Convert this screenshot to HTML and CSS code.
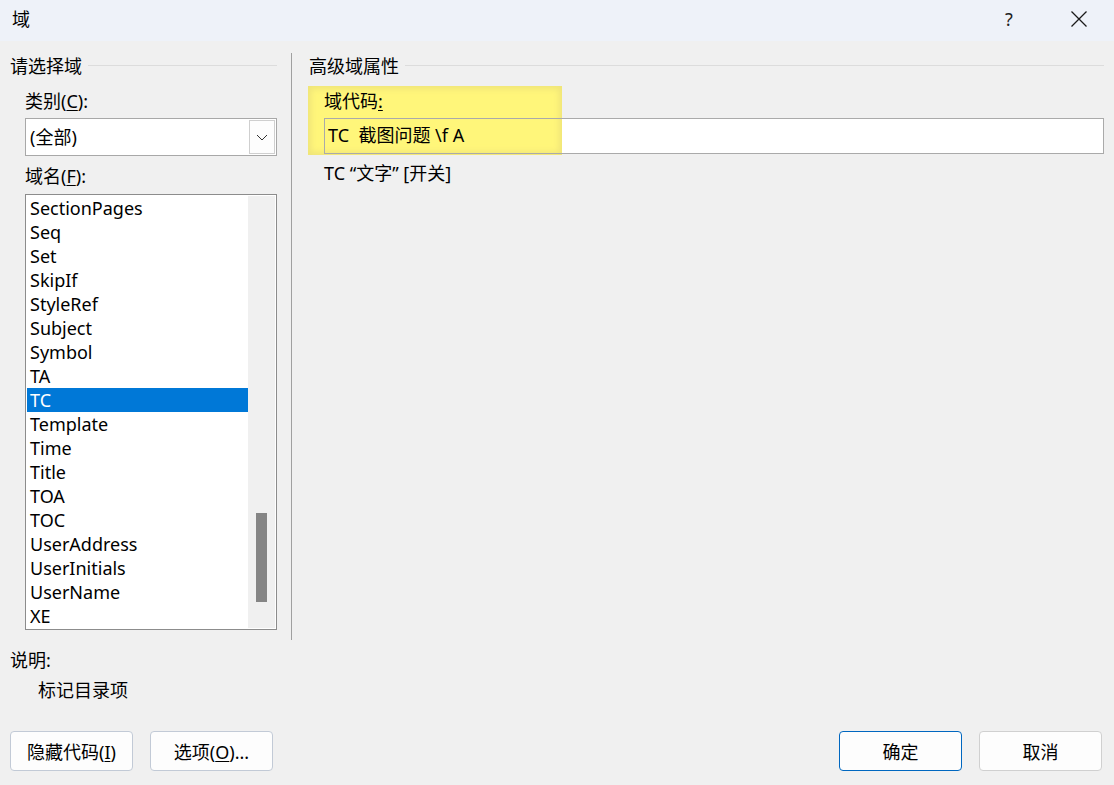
FILE: index.html
```html
<!DOCTYPE html>
<html lang="zh-CN">
<head>
  <meta charset="UTF-8">
  <title>域</title>
  <link rel="stylesheet" href="styles.css">
</head>
<body>
  <div class="window">
    <div class="titlebar">
      <span class="title">域</span>
      <div class="title-btns">
        <span class="help">?</span>
        <span class="close">
          <svg width="16" height="16" viewBox="0 0 16 16"><path d="M0.5 0.5 L15.5 15.5 M15.5 0.5 L0.5 15.5" stroke="#1a1a1a" stroke-width="1.3" fill="none"/></svg>
        </span>
      </div>
    </div>

    <div class="main">
      <div class="left-pane">
        <div class="group-head"><span>请选择域</span><span class="rule"></span></div>
        <div class="field-label">类别(<u>C</u>):</div>
        <div class="combo">
          <span class="combo-value">(全部)</span>
          <span class="combo-btn">
            <svg width="12" height="7" viewBox="0 0 12 7"><path d="M1 1 L6 6 L11 1" stroke="#333" stroke-width="1" fill="none"/></svg>
          </span>
        </div>
        <div class="field-label">域名(<u>F</u>):</div>
        <div class="listbox">
          <ul class="items">
            <li>SectionPages</li>
            <li>Seq</li>
            <li>Set</li>
            <li>SkipIf</li>
            <li>StyleRef</li>
            <li>Subject</li>
            <li>Symbol</li>
            <li>TA</li>
            <li class="selected">TC</li>
            <li>Template</li>
            <li>Time</li>
            <li>Title</li>
            <li>TOA</li>
            <li>TOC</li>
            <li>UserAddress</li>
            <li>UserInitials</li>
            <li>UserName</li>
            <li>XE</li>
          </ul>
          <div class="scrollbar"><div class="thumb"></div></div>
        </div>
      </div>

      <div class="divider"></div>

      <div class="right-pane">
        <div class="group-head"><span>高级域属性</span><span class="rule"></span></div>
        <div class="code-block">
          <div class="highlight"></div>
          <div class="field-label code-label">域代码<u>:</u></div>
          <div class="code-input">TC&nbsp;&nbsp;截图问题 \f A</div>
        </div>
        <div class="syntax">TC “文字” [开关]</div>
      </div>
    </div>

    <div class="desc">
      <div class="desc-label">说明:</div>
      <div class="desc-text">标记目录项</div>
    </div>

    <div class="footer">
      <div class="btn-group">
        <button class="btn side">隐藏代码(<u>I</u>)</button>
        <button class="btn side">选项(<u>O</u>)...</button>
      </div>
      <div class="btn-group">
        <button class="btn primary">确定</button>
        <button class="btn">取消</button>
      </div>
    </div>
  </div>
</body>
</html>
```

FILE: styles.css
```css
* {
  margin: 0;
  padding: 0;
  box-sizing: border-box;
}

body {
  width: 1114px;
  height: 785px;
  background: #f0f0f0;
  font-family: "Noto Sans", "Noto Sans CJK SC", sans-serif;
  font-size: 18px;
  color: #000;
  overflow: hidden;
}

u {
  text-decoration: underline;
  text-underline-offset: 2px;
}

.titlebar {
  height: 41px;
  background: #eef2f9;
  display: flex;
  justify-content: space-between;
  align-items: center;
  padding-left: 12px;
}

.title {
  font-size: 18px;
  line-height: 24px;
  margin-top: -4px;
}

.title-btns {
  display: flex;
  align-items: center;
  margin-top: -4px;
}

.help {
  width: 20px;
  text-align: center;
  font-size: 18px;
  color: #222;
  margin-right: 52px;
}

.close {
  display: flex;
  margin-right: 27px;
}

.main {
  display: flex;
  height: 607px;
  padding-top: 12px;
}

.left-pane {
  width: 277px;
  padding-left: 10px;
}

.group-head {
  display: flex;
  align-items: center;
  height: 26px;
  line-height: 26px;
}

.group-head .rule {
  flex: 1;
  height: 1px;
  background: #dcdcdc;
  margin-left: 6px;
  margin-top: -2px;
}

.field-label {
  height: 24px;
  line-height: 24px;
  margin-left: 15px;
}

.left-pane .group-head + .field-label {
  margin-top: 10px;
}

.combo {
  margin: 5px 0 0 15px;
  height: 38px;
  border: 1px solid #a8a8a8;
  background: #fff;
  display: flex;
  justify-content: space-between;
  align-items: center;
  padding: 1px 1px 1px 4px;
}

.combo-value {
  line-height: 24px;
}

.combo-btn {
  width: 26px;
  height: 34px;
  border: 1px solid #cfcfcf;
  background: #fdfdfd;
  display: flex;
  align-items: center;
  justify-content: center;
}

.combo + .field-label {
  margin-top: 8px;
}

.listbox {
  margin: 6px 0 0 15px;
  height: 436px;
  border: 1px solid #8c8c8c;
  background: #fff;
  display: flex;
  padding: 1px 1px 1px 1px;
}

.items {
  list-style: none;
  width: 221px;
}

.items li {
  height: 24px;
  line-height: 24px;
  padding-left: 3px;
}

.items li.selected {
  background: #0078d7;
  color: #fff;
}

.scrollbar {
  flex: 1;
  background: #f0f0f0;
  position: relative;
}

.thumb {
  position: absolute;
  left: 8px;
  top: 317px;
  width: 11px;
  height: 89px;
  background: #858585;
}

.divider {
  width: 1px;
  background: #a0a0a0;
  margin-left: 14px;
  height: 587px;
}

.right-pane {
  flex: 1;
  padding-left: 16px;
  padding-right: 10px;
}

.right-pane .group-head {
  padding-left: 1px;
}

.code-block {
  position: relative;
  margin-top: 7px;
  padding-top: 3px;
}

.highlight {
  position: absolute;
  left: 0;
  top: 0;
  width: 254px;
  height: 69px;
  background: #fff67a;
  box-shadow: inset 0 0 6px 3px #efe479;
}

.code-label {
  position: relative;
  margin-left: 16px;
}

.code-input {
  position: relative;
  margin: 5px 0 0 16px;
  height: 36px;
  border: 1px solid #aaaaaa;
  line-height: 32px;
  padding-left: 3px;
  background: linear-gradient(to right, transparent 237px, #fff 237px);
}

.syntax {
  margin: 7px 0 0 16px;
  line-height: 24px;
}

.desc {
  padding-left: 10px;
}

.desc-label {
  line-height: 24px;
  height: 24px;
}

.desc-text {
  margin-left: 28px;
  line-height: 24px;
  margin-top: 6px;
}

.footer {
  display: flex;
  justify-content: space-between;
  padding: 0 12px 0 10px;
  margin-top: 29px;
}

.btn-group {
  display: flex;
  gap: 17px;
}

.btn {
  width: 123px;
  height: 40px;
  font-family: inherit;
  font-size: 18px;
  color: #000;
  background: #fdfdfd;
  border: 1px solid #d0d0d0;
  border-radius: 4px;
}

.btn.side {
  border-color: #c2cad6;
}

.btn.primary {
  border-color: #0067c0;
}
```
